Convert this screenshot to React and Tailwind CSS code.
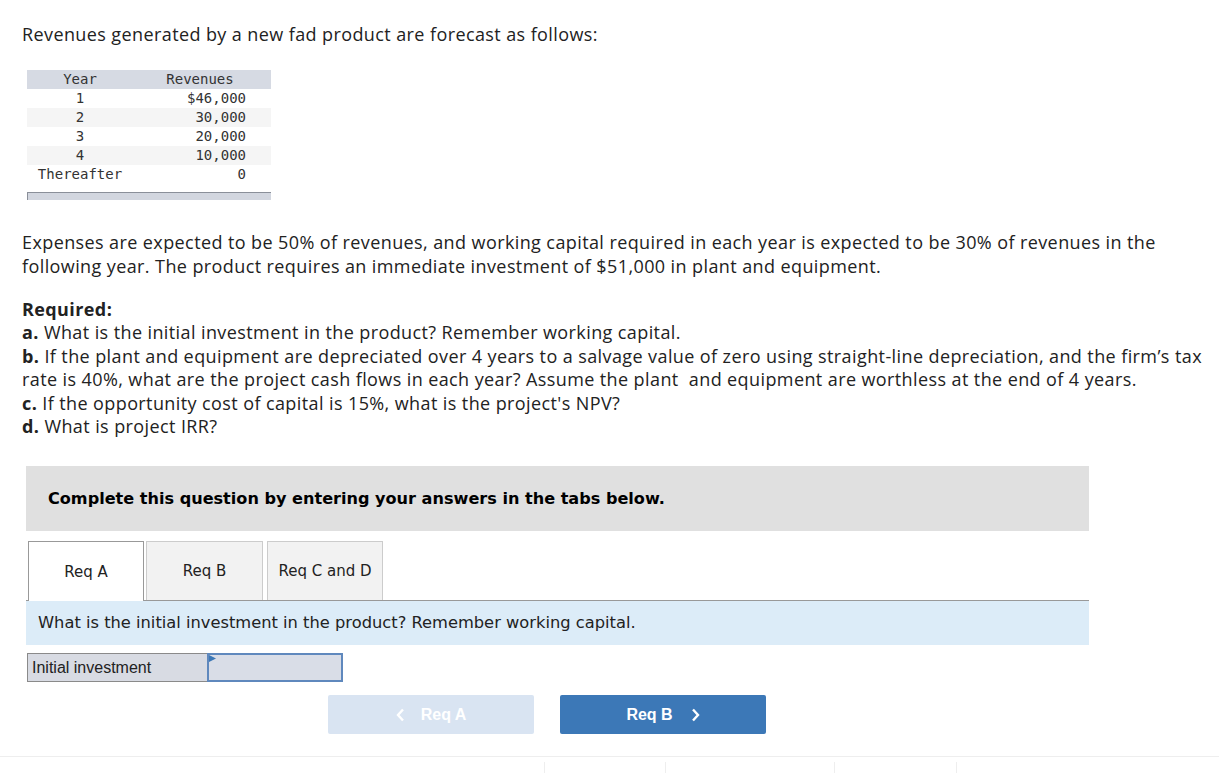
import React from "react";

const rows = [
  { year: "1", rev: "$46,000", shade: false },
  { year: "2", rev: "30,000", shade: true },
  { year: "3", rev: "20,000", shade: false },
  { year: "4", rev: "10,000", shade: true },
  { year: "Thereafter", rev: "0", shade: false },
];

const body = { fontFamily: "'Open Sans', Lato, sans-serif" };
const verdana = { fontFamily: "'DejaVu Sans', Verdana, sans-serif" };
const arial = { fontFamily: "'Liberation Sans', Arial, sans-serif" };
const mono = { fontFamily: "'DejaVu Sans Mono', Consolas, monospace" };

export default function App() {
  return (
    <div className="relative w-[1219px] h-[773px] bg-white overflow-hidden text-[#222]">
      <div className="pl-[22px] pt-[22px]" style={body}>
        <p className="text-[18px] leading-[24px] tracking-[0.4px] whitespace-nowrap">
          Revenues generated by a new fad product are forecast as follows:
        </p>

        {/* revenue table */}
        <div className="mt-[24px] ml-[5px] w-[244px]" style={mono}>
          <div className="flex h-[19px] items-center bg-[#d6dae3] text-[14px] text-[#333]">
            <div className="w-[106px] text-center">Year</div>
            <div className="w-[138px] text-center pr-[4px]">Revenues</div>
          </div>
          {rows.map((r) => (
            <div
              key={r.year}
              className={`flex h-[19px] items-center text-[14px] text-[#333] ${r.shade ? "bg-[#f5f5f5]" : "bg-white"}`}
            >
              <div className="w-[106px] text-center">{r.year}</div>
              <div className="w-[138px] text-right pr-[25px]">{r.rev}</div>
            </div>
          ))}
          <div className="mt-[8px] h-[8px] bg-[#d2d6df] border-t border-l border-[#8a8f99]" />
        </div>

        <p className="mt-[30px] text-[18px] leading-[24px] tracking-[0.4px] whitespace-nowrap">
          Expenses are expected to be 50% of revenues, and working capital required in each year is expected to be 30% of revenues in the
          <br />
          following year. The product requires an immediate investment of $51,000 in plant and equipment.
        </p>

        <div className="mt-[20px] text-[18px] leading-[23.4px] tracking-[0.4px] whitespace-nowrap">
          <p className="font-bold">Required:</p>
          <p>
            <span className="font-bold">a.</span> What is the initial investment in the product? Remember working capital.
          </p>
          <p>
            <span className="font-bold">b.</span> If the plant and equipment are depreciated over 4 years to a salvage value of zero using straight-line depreciation, and the firm’s tax
            <br />
            rate is 40%, what are the project cash flows in each year? Assume the plant&nbsp; and equipment are worthless at the end of 4 years.
          </p>
          <p>
            <span className="font-bold">c.</span> If the opportunity cost of capital is 15%, what is the project's NPV?
          </p>
          <p>
            <span className="font-bold">d.</span> What is project IRR?
          </p>
        </div>
      </div>

      {/* answer area */}
      <div className="ml-[26px] mt-[28px] w-[1063px]">
        <div className="h-[65px] bg-[#e0e0e0] flex items-center pl-[22px]" style={verdana}>
          <span className="text-[16.1px] font-bold text-black">
            Complete this question by entering your answers in the tabs below.
          </span>
        </div>

        <div className="mt-[10px] flex items-end gap-[2px] pl-[2px] border-b border-[#999]" style={verdana}>
          <div className="w-[116px] h-[60px] -mb-px bg-white border border-b-0 border-[#999] flex items-center justify-center text-[15px] text-[#222]">
            Req A
          </div>
          <div className="w-[117px] h-[59px] bg-[#f2f2f2] border border-b-0 border-[#ccc] flex items-center justify-center text-[15px] text-[#222]">
            Req B
          </div>
          <div className="ml-[2px] w-[116px] h-[59px] bg-[#f2f2f2] border border-b-0 border-[#ccc] flex items-center justify-center text-[15px] text-[#222]">
            Req C and D
          </div>
        </div>

        <div className="h-[44px] bg-[#dcecf8] flex items-center pl-[12px]" style={verdana}>
          <span className="text-[16.3px] text-[#222]">
            What is the initial investment in the product? Remember working capital.
          </span>
        </div>

        <div className="mt-[8px] flex ml-[1px]" style={arial}>
          <div className="w-[180px] h-[29px] bg-[#d8dbe3] border border-r-0 border-[#8a8a8a] flex items-center pl-[4px] text-[16px] text-[#222]">
            Initial investment
          </div>
          <div className="relative w-[136px] h-[29px] bg-[#d9dde7] border-2 border-[#5f88bd]">
            <svg className="absolute left-0 top-0" width="8" height="8" viewBox="0 0 8 8">
              <polygon points="0,0 7,3.5 0,7" fill="#3d78b6" />
            </svg>
          </div>
        </div>

        <div className="mt-[13px] flex pl-[302px] gap-[26px]" style={arial}>
          <button className="w-[206px] h-[39px] rounded-[2px] bg-[#d9e4f2] text-white text-[16px] font-bold flex items-center justify-center gap-[16px]">
            <svg width="9" height="14" viewBox="0 0 9 14">
              <path d="M7 1.5 L2 7 L7 12.5" stroke="white" strokeWidth="2.4" fill="none" />
            </svg>
            <span>Req A</span>
          </button>
          <button className="w-[206px] h-[39px] rounded-[2px] bg-[#3c78b7] text-white text-[16px] font-bold flex items-center justify-center gap-[18px]">
            <span>Req B</span>
            <svg width="9" height="14" viewBox="0 0 9 14">
              <path d="M2 1.5 L7 7 L2 12.5" stroke="white" strokeWidth="2.4" fill="none" />
            </svg>
          </button>
        </div>
      </div>

      {/* footer strip */}
      <div className="absolute left-0 right-0 top-[756px] border-t border-[#eeeeee] h-[17px]">
        <div className="absolute left-[544px] top-[5px] h-[12px] border-l border-[#eeeeee]" />
        <div className="absolute left-[665px] top-[5px] h-[12px] border-l border-[#eeeeee]" />
        <div className="absolute left-[834px] top-[5px] h-[12px] border-l border-[#eeeeee]" />
        <div className="absolute left-[956px] top-[5px] h-[12px] border-l border-[#eeeeee]" />
      </div>
    </div>
  );
}
